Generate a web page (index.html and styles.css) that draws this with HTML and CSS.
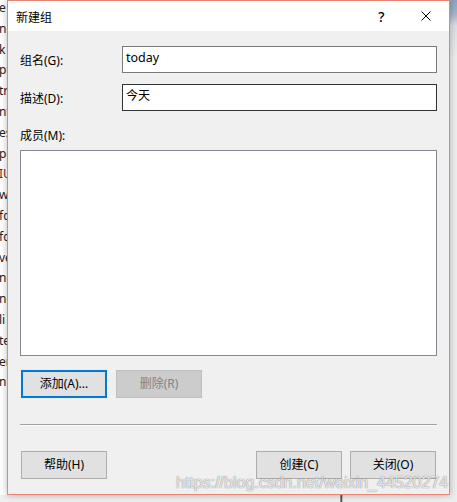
FILE: index.html
```html
<!DOCTYPE html>
<html lang="zh-CN">
<head>
<meta charset="utf-8">
<title>新建组</title>
<link rel="stylesheet" href="styles.css">
</head>
<body>
<div class="desk">
  <div class="bgwin">
    <div>e</div><div>ni</div><div>k</div><div>pt</div><div>tri</div><div>nt</div><div>es</div><div>pe</div><div class="red">IU</div><div>w</div><div>fc</div><div>fc</div><div>ve</div><div>ne</div><div>ne</div><div>li</div><div>te</div><div>er</div><div>nr</div>
  </div>
  <div class="rightwin"></div>
  <div class="vline"></div>

  <div class="dialog">
    <div class="titlebar">
      <span class="title">新建组</span>
      <span class="tbtn help">?</span>
      <span class="tbtn close">
        <svg width="10" height="10" viewBox="0 0 10 10"><path d="M0.5 0.5 L9.5 9.5 M9.5 0.5 L0.5 9.5" stroke="#000" stroke-width="1" fill="none"/></svg>
      </span>
    </div>
    <div class="content">
      <div class="row">
        <span class="label">组名(G):</span>
        <div class="input">today</div>
      </div>
      <div class="row row2">
        <span class="label">描述(D):</span>
        <div class="input hover">今天</div>
      </div>
      <div class="members">成员(M):</div>
      <div class="list"></div>
      <div class="btnrow">
        <div class="btn focus">添加(A)...</div>
        <div class="btn disabled">删除(R)</div>
      </div>
      <div class="sep"></div>
      <div class="footer">
        <div class="btn">帮助(H)</div>
        <div class="right">
          <div class="btn">创建(C)</div>
          <div class="btn">关闭(O)</div>
        </div>
      </div>
    </div>
  </div>

  <div class="watermark">https://blog.csdn.net/weixin_44520274</div>
</div>
</body>
</html>
```

FILE: styles.css
```css
html, body {
  margin: 0;
  padding: 0;
}
body {
  width: 457px;
  height: 502px;
  overflow: hidden;
  background: #efefef;
  font-family: "Noto Sans", "Noto Sans CJK SC", sans-serif;
  font-size: 12px;
  color: #000;
}
.desk {
  position: relative;
  width: 457px;
  height: 502px;
}
.bgwin {
  position: absolute;
  left: 0;
  top: 0;
  width: 8px;
  height: 495px;
  background: #fff;
  overflow: hidden;
  font-family: "Noto Sans", sans-serif;
  font-size: 12px;
  line-height: 20.8px;
  color: #222;
}
.bgwin div {
  margin-left: -1px;
  margin-top: -2px;
  margin-bottom: 2px;
  white-space: nowrap;
}
.bgwin .red {
  color: #7a1c1c;
}
.rightwin {
  position: absolute;
  left: 449px;
  top: 0;
  width: 8px;
  height: 502px;
  background: linear-gradient(to bottom, #8fa2ba 0, #a6b5c8 14px, #dcdfe3 26px, #eeeeee 60px, #eeeeee 100%);
}
.vline {
  position: absolute;
  left: 340px;
  top: 494px;
  width: 3px;
  height: 8px;
  background: linear-gradient(to right, #bdbdbd 0, #555 1px, #555 2px, #bdbdbd 2px);
}
.dialog {
  position: absolute;
  left: 7px;
  top: 0;
  width: 441px;
  height: 493px;
  border: 1px solid #ea8472;
  background: #f0f0f0;
  box-shadow: 0 0 7px rgba(0, 0, 0, 0.28);
  display: flex;
  flex-direction: column;
}
.titlebar {
  height: 30px;
  background: #fff;
  display: flex;
  align-items: center;
}
.title {
  flex: 1;
  padding-left: 8px;
  font-family: "Noto Sans CJK SC", sans-serif;
  font-size: 12px;
}
.tbtn {
  width: 46px;
  height: 30px;
  display: flex;
  align-items: center;
  justify-content: center;
}
.help {
  font-size: 14px;
  font-family: "Noto Sans", sans-serif;
  font-weight: 500;
  padding-left: 3px;
  box-sizing: border-box;
}
.close svg {
  display: block;
  margin-top: -1px;
}
.content {
  padding: 15px 12px 0 12px;
  display: flex;
  flex-direction: column;
}
.row {
  display: flex;
  align-items: center;
  height: 27px;
}
.row2 {
  margin-top: 11px;
}
.label {
  width: 102px;
  line-height: 16px;
  padding-top: 2px;
}
.input {
  width: 315px;
  height: 27px;
  box-sizing: border-box;
  border: 1px solid #7a7a7a;
  background: #fff;
  padding: 2px 3px 0 3px;
  line-height: 18px;
  font-size: 12.5px;
}
.input.hover {
  border-color: #333;
  font-size: 12px;
}
.members {
  margin-top: 17px;
  height: 16px;
  line-height: 16px;
}
.list {
  margin-top: 6px;
  height: 206px;
  box-sizing: border-box;
  border: 1px solid #828790;
  background: #fff;
}
.btnrow {
  margin-top: 14px;
  padding: 0 1px;
  display: flex;
  gap: 9px;
}
.btn {
  width: 86px;
  height: 28px;
  box-sizing: border-box;
  border: 1px solid #adadad;
  background: #e1e1e1;
  display: flex;
  align-items: center;
  justify-content: center;
  line-height: 16px;
}
.btn.focus {
  border: 2px solid #0078d7;
}
.btn.disabled {
  background: #cccccc;
  border-color: #bfbfbf;
  color: #838383;
}
.sep {
  margin-top: 26px;
  height: 1px;
  background: #a0a0a0;
  border-bottom: 1px solid #fbfbfb;
}
.footer {
  margin-top: 25px;
  padding: 0 1px;
  display: flex;
  justify-content: space-between;
}
.right {
  display: flex;
  gap: 8px;
}
.watermark {
  position: absolute;
  left: 176px;
  top: 475px;
  font-family: "Liberation Sans", Arial, sans-serif;
  font-size: 16px;
  line-height: 16px;
  white-space: nowrap;
  color: rgba(255, 255, 255, 0.8);
  text-shadow: 0 0 1px rgba(90, 90, 90, 0.7), 0 0 1px rgba(90, 90, 90, 0.4);
}
```
